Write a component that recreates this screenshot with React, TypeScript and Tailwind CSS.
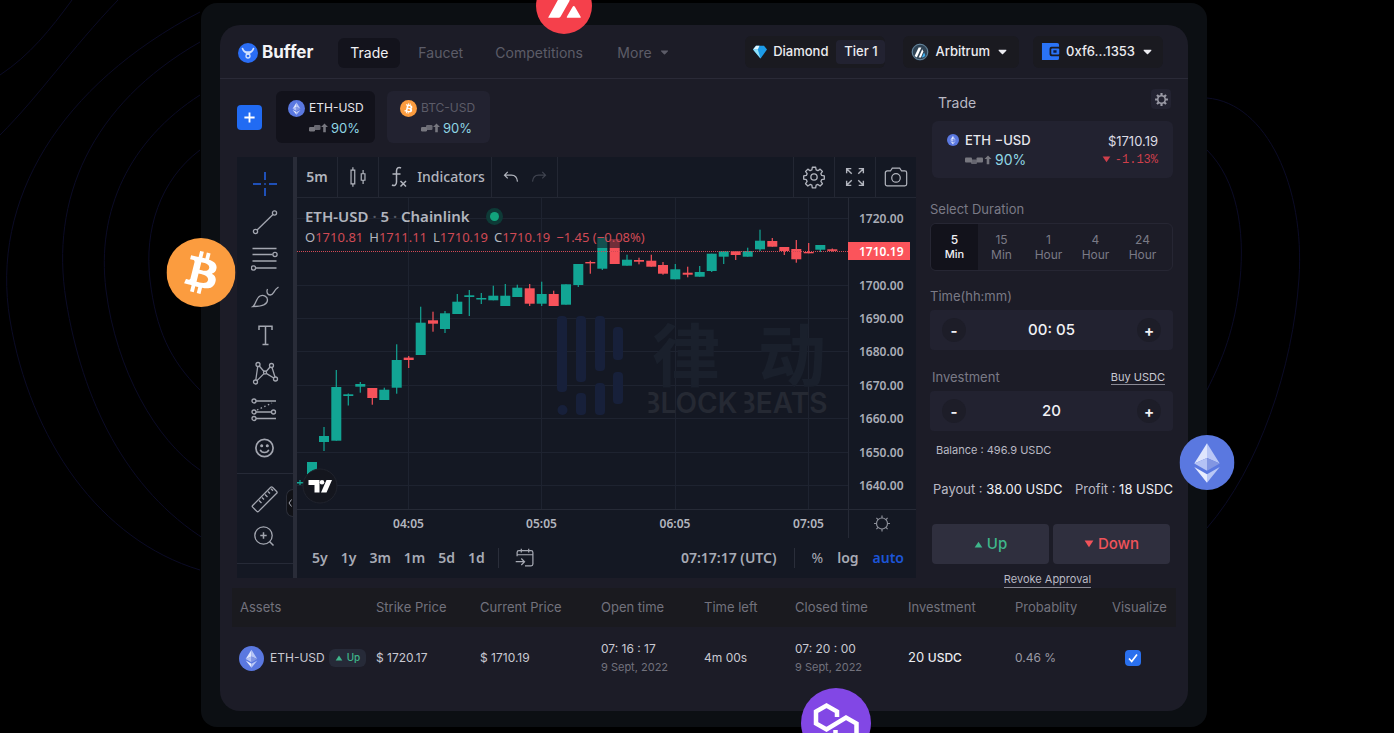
import React, { useState } from "react";

type Candle = { x: number; top: number; bottom: number; high: number; low: number; up: boolean };

const c = (x: number, top: number, bottom: number, high: number, low: number, up: boolean): Candle => ({
  x, top, bottom, high, low, up,
});

const candles: Candle[] = [
  c(300, 482, 483.5, 480, 485, true),
  c(312, 462, 476, 462, 476, true),
  c(324, 436, 442, 427, 451, true),
  c(336.3, 387, 440.7, 370, 440.7, true),
  c(348.3, 394.3, 396, 393.5, 405.5, true),
  c(360.3, 384, 386.7, 382, 392.7, true),
  c(372.3, 388, 398, 388, 404.7, false),
  c(384.3, 389.7, 400, 387.7, 400, true),
  c(396.7, 360, 387.7, 344.3, 393.7, true),
  c(408.7, 357.6, 360, 356, 368, false),
  c(420.7, 322.7, 355, 306.7, 355, true),
  c(433, 320.3, 323.7, 311.7, 331.7, false),
  c(445, 313.3, 329, 311, 333, true),
  c(457.3, 301.7, 314, 294, 314, true),
  c(469.3, 295.3, 297, 290, 316, true),
  c(481.3, 298, 299.5, 293, 304, true),
  c(493.3, 295.7, 300.3, 285.7, 300.3, true),
  c(505.3, 295.7, 306, 284, 306, true),
  c(517.3, 287.7, 297, 284.7, 297, true),
  c(529.7, 288.3, 303.7, 284, 306, false),
  c(541.7, 294, 303.7, 281.7, 306, true),
  c(553.7, 294, 306, 290.7, 306, false),
  c(566, 284.3, 304.7, 284.3, 304.7, true),
  c(578.3, 264, 285, 264, 287, true),
  c(590.3, 262, 263.4, 260.7, 273.7, false),
  c(602.3, 237, 268.7, 237, 270, true),
  c(614.7, 239, 264, 239, 264, false),
  c(627, 259.7, 265.7, 254.7, 265.7, true),
  c(639, 260, 261.7, 257.7, 264.3, false),
  c(651.3, 260.7, 266.7, 254.7, 266.7, false),
  c(663, 265, 273.7, 262, 274.7, false),
  c(675.3, 269.3, 279.3, 264, 279.3, true),
  c(687.7, 272.7, 274.7, 266.7, 277.3, false),
  c(699.7, 272, 276.7, 266, 276.7, true),
  c(711.7, 253.7, 271, 253.7, 272, true),
  c(723.7, 251.3, 256.7, 251.3, 264, true),
  c(735.7, 251.3, 255, 251.3, 260, false),
  c(747.7, 251, 256.7, 247.7, 256.7, true),
  c(760, 240.7, 249.3, 229.7, 251, true),
  c(772.3, 241, 246.7, 238, 246.7, false),
  c(784.3, 247, 251, 247, 255, false),
  c(796.3, 249, 259.3, 240, 262.7, false),
  c(808.7, 252, 253.3, 243, 253.3, false),
  c(820.3, 245, 249.7, 245, 252, true),
  c(832.3, 249.3, 250.9, 248.5, 251.5, false),
];

const prices: [string, number][] = [
  ["1720.00", 218], ["1700.00", 285], ["1690.00", 318], ["1680.00", 351.5],
  ["1670.00", 385], ["1660.00", 418.5], ["1650.00", 452], ["1640.00", 485],
];
const times: [string, number][] = [["04:05", 408.5], ["05:05", 541.5], ["06:05", 675], ["07:05", 808.5]];

const CHART_FONT = '"Noto Sans","Open Sans",sans-serif';

function EthLogo({ className }: { className: string }) {
  return (
    <svg viewBox="0 0 54 54" className={className} aria-hidden="true">
      <circle cx="27" cy="27" r="27" fill="#5a78e0" />
      <path d="M27 8 14.5 28 27 22.5z" fill="#dfe6fd" />
      <path d="M27 8 39.5 28 27 22.5z" fill="#b9c7f6" />
      <path d="M14.5 28 27 22.5V35z" fill="#b4c2f5" />
      <path d="M39.5 28 27 22.5V35z" fill="#8296e2" />
      <path d="M14.5 31.5 27 38.5V47z" fill="#e8edfe" />
      <path d="M39.5 31.5 27 38.5V47z" fill="#b9c7f6" />
    </svg>
  );
}

function BtcLogo({ className }: { className: string }) {
  return (
    <svg viewBox="0 0 32 32" className={className} aria-hidden="true">
      <circle cx="16" cy="16" r="16" fill="#fb9c3f" />
      <path
        fill="#fff"
        d="M23.189 14.02c.314-2.096-1.283-3.223-3.465-3.975l.708-2.84-1.728-.43-.69 2.765c-.454-.114-.92-.22-1.385-.326l.695-2.783L15.596 6l-.708 2.839c-.376-.086-.746-.17-1.104-.26l.002-.009-2.384-.595-.46 1.846s1.283.294 1.256.312c.7.175.826.638.805 1.006l-.806 3.235c.048.012.11.03.18.057l-.183-.045-1.13 4.532c-.086.212-.303.531-.793.41.018.025-1.256-.313-1.256-.313l-.858 1.978 2.25.561c.418.105.828.215 1.231.318l-.715 2.872 1.727.43.708-2.84c.472.127.93.245 1.378.357l-.706 2.828 1.728.43.715-2.866c2.948.558 5.164.333 6.097-2.333.752-2.146-.037-3.385-1.588-4.192 1.13-.26 1.98-1.003 2.207-2.538zm-3.95 5.538c-.533 2.147-4.148.986-5.32.695l.95-3.805c1.172.293 4.929.872 4.37 3.11zm.535-5.569c-.487 1.953-3.495.96-4.47.717l.86-3.45c.975.243 4.118.696 3.61 2.733z"
      />
    </svg>
  );
}

function Caret({ className }: { className: string }) {
  return (
    <svg viewBox="0 0 10 6" className={className} aria-hidden="true">
      <path d="M1.2.6h7.6c.5 0 .7.5.4.9L5.6 5.2c-.3.4-.9.4-1.2 0L.8 1.5C.5 1.1.7.6 1.2.6z" fill="currentColor" />
    </svg>
  );
}

function Triangle({ up, className }: { up?: boolean; className: string }) {
  return (
    <svg viewBox="0 0 10 8" className={className} aria-hidden="true">
      <path d={up ? "M5 .8 9.4 7.4H.6z" : "M5 7.2.6.6h8.800z"} fill="currentColor" />
    </svg>
  );
}

function PayoutMark() {
  return (
    <svg viewBox="0 0 20 10" className="h-[10px] w-5 text-[#77777f]" fill="currentColor" aria-hidden="true">
      <rect x="1" y="4" width="6" height="4.500" rx="1.200" />
      <rect x="6" y="2" width="6.500" height="5" rx="1.200" opacity=".85" />
      <path d="M16.500.5 20 4h-2.200v5.200h-2.600V4H13z" />
    </svg>
  );
}

function Gear({ className }: { className: string }) {
  return (
    <svg viewBox="0 0 28 28" className={className} fill="none" stroke="currentColor" strokeWidth="1.400" strokeLinejoin="round" aria-hidden="true">
      <path d="M12.2 3.500h3.600l.5 2.900 1.900.8 2.400-1.700 2.500 2.500-1.700 2.400.8 1.900 2.900.5v3.600l-2.900.5-.8 1.900 1.700 2.400-2.500 2.500-2.400-1.700-1.900.8-.5 2.900h-3.600l-.5-2.900-1.900-.8-2.400 1.700-2.500-2.500 1.700-2.400-.8-1.900-2.900-.5v-3.600l2.900-.5.8-1.900-1.700-2.400 2.500-2.500 2.400 1.700 1.900-.8z" />
      <circle cx="14" cy="14" r="3.400" />
    </svg>
  );
}

function ToolIcon({ children, small, className = "" }: { children: React.ReactNode; small?: boolean; className?: string }) {
  return (
    <svg viewBox="0 0 28 28" className={`${small ? "h-[26px] w-[26px]" : "h-7 w-7"} ${className}`} fill="none" stroke="currentColor" strokeWidth="1.300" aria-hidden="true">
      {children}
    </svg>
  );
}

const drawingTools: { name: string; active?: boolean; icon: React.ReactNode }[] = [
  { name: "Cross", active: true, icon: <path strokeWidth="2" d="M14 2v8M14 18v8M2 14h8M18 14h8M14 13.200v1.600" /> },
  {
    name: "Trend line",
    icon: (<><circle cx="4.500" cy="23.500" r="2.100" /><circle cx="23.500" cy="5" r="2.100" /><path d="M6.100 22 22 6.500" /></>),
  },
  {
    name: "Fib retracement",
    icon: (<><path d="M1.500 3.500h24M1.500 9.500h20M1.500 16h24M4.500 23h21" /><circle cx="24" cy="9.500" r="2.100" /><circle cx="2.500" cy="23" r="2.100" /></>),
  },
  {
    name: "Brush",
    icon: (<><path d="M2 23.500c3-2 3-8.500 7-10.500 3.500-1.500 7.500.5 7.500 4 0 5-5.500 6.500-14.500 6.500z" /><path d="M16.500 6c-1.500 3 0 6 2.700 6 3.800 0 3-4.500 8.300-8" /></>),
  },
  { name: "Text", icon: <path strokeWidth="1.500" d="M8 9V5.200h13V9M14.500 5.200v18.300M11.500 23.500h6" /> },
  {
    name: "Patterns",
    icon: (<><circle cx="7" cy="5.500" r="2" /><circle cx="20.500" cy="6.500" r="2" /><circle cx="4.500" cy="23" r="2" /><circle cx="24.500" cy="20" r="2" /><circle cx="14" cy="13.500" r="1.500" /><path d="M6.700 7.500 4.800 21M8.300 7 13 12.500M15.200 12.500 19 8M21 8.500l3 9.500M6 21.600l7-7M15.200 14.400l7.600 4.600" /></>),
  },
  {
    name: "Prediction",
    icon: (<><circle cx="3" cy="5" r="2" /><circle cx="3" cy="16" r="2" /><circle cx="22.500" cy="16" r="2" /><circle cx="3" cy="22.500" r="2" /><path d="M5 5h20M5 16h15.500M5 22.500h20" /><path strokeDasharray="1.500 2.500" d="M6 14 21 7" /></>),
  },
  {
    name: "Icons",
    icon: (<><circle cx="13.500" cy="14" r="8.600" strokeWidth="1.700" /><path strokeWidth="1.600" d="M9.200 15.800c1.500 3.600 7.100 3.600 8.600 0" /><circle cx="10.700" cy="11.700" r=".9" fill="currentColor" /><circle cx="16.300" cy="11.700" r=".9" fill="currentColor" /></>),
  },
];

function Header() {
  return (
    <header className="flex h-[54px] items-center justify-between border-b border-[#2a2a37] pl-[18px] pr-[25px]">
      <div className="flex items-center pt-[2px]">
        <a href="#home" className="flex items-center gap-1 text-[17px] font-bold text-[#f3f3f6]">
          <svg viewBox="0 0 20 20" className="h-5 w-5" aria-hidden="true">
            <circle cx="10" cy="10" r="10" fill="#2a6df5" />
            <path d="M4.500 5.500c1 3 3 4 5.500 3.500 2.500.5 4.500-.5 5.500-3.500M7 9l3 2 3-2" stroke="#cfe0ff" strokeWidth="1.700" fill="none" strokeLinecap="round" />
            <circle cx="10" cy="13" r="2" fill="none" stroke="#cfe0ff" strokeWidth="1.300" />
          </svg>
          Buffer
        </a>
        <nav className="ml-[25px] flex items-center text-sm text-[#5c5c68]">
          <a href="#trade" className="grid h-[30px] w-[62px] place-items-center rounded-md bg-[#13131c] text-[#f0f0f4]">Trade</a>
          <a href="#faucet" className="ml-[18px] w-[77px]">Faucet</a>
          <a href="#competitions" className="w-[122px]">Competitions</a>
          <button type="button" className="flex items-center gap-2">
            More
            <Caret className="h-[5px] w-[9px]" />
          </button>
        </nav>
      </div>
      <div className="flex items-center text-[13px] font-medium text-[#ececf1]">
        <div className="flex h-8 items-center rounded-md bg-[#1a1a20] pl-2">
          <svg viewBox="0 0 14 14" className="mr-[6px] h-[14px] w-[14px]" aria-hidden="true">
            <path d="M3 .8h8L14 4.500 7.500 13.500 0 4.500z" fill="#1c9be8" />
            <path d="M3 .8h3.500L4.800 4.500H0z" fill="#dff6ff" />
            <path d="M0 4.500h4.800l2.700 9z" fill="#8fe0f7" />
          </svg>
          Diamond
          <span className="ml-2 grid h-6 w-[49px] place-items-center rounded bg-[#222231]">Tier 1</span>
        </div>
        <button type="button" className="ml-[18px] flex h-8 items-center rounded-md bg-[#1a1a20] pl-2 pr-3">
          <svg viewBox="0 0 20 20" className="mr-[6px] h-[18px] w-[18px]" aria-hidden="true">
            <circle cx="10" cy="10" r="9.500" fill="#2f4354" />
            <circle cx="10" cy="10" r="8.600" fill="none" stroke="#6d8ea6" strokeWidth="1" />
            <path d="M4 14.500 8.500 5h3L6.500 16z" fill="#fff" />
            <path d="M8.500 16 12.500 7l1.200 2.500L11 16z" fill="#fff" />
            <path d="M12 16l2.500-5.500 1.500 3-1.500 2z" fill="#3fb0ef" />
          </svg>
          Arbitrum
          <Caret className="ml-2 h-[6px] w-[9px]" />
        </button>
        <button type="button" className="ml-[14px] flex h-8 items-center rounded-md bg-[#1a1a20] pl-2 pr-[11px]">
          <svg viewBox="0 0 20 20" className="mr-[6px] h-[19px] w-[19px]" aria-hidden="true">
            <path d="M1 1h16a2 2 0 0 1 2 2v2h-8a2 2 0 0 0-2 2v6a2 2 0 0 0 2 2h8v2a2 2 0 0 1-2 2H1z" fill="#2a73f6" />
            <rect x="10.800" y="6.800" width="8.400" height="6.400" rx="1" fill="#2a73f6" />
            <rect x="13" y="8.700" width="3.400" height="2.600" fill="#0d1c40" />
          </svg>
          0xf6...1353
          <Caret className="ml-2 h-[6px] w-[9px]" />
        </button>
      </div>
    </header>
  );
}

function PairTabs() {
  return (
    <div className="flex h-[52px] items-center">
      <button type="button" aria-label="Add pair" className="grid h-[25px] w-[25px] place-items-center rounded bg-[#216bf3]">
        <svg viewBox="0 0 14 14" className="h-[13px] w-[13px]" aria-hidden="true">
          <path d="M7 1.500v11M1.500 7h11" stroke="#fff" strokeWidth="2" />
        </svg>
      </button>
      <button type="button" className="ml-[14px] grid h-full w-[99px] grid-cols-[auto_1fr] content-center items-center gap-x-1 rounded-md bg-[#12121b] pl-3 pt-[2px] text-left text-xs leading-5 text-[#e6e6ec]">
        <EthLogo className="h-[17px] w-[17px]" />
        <span>ETH-USD</span>
        <span className="col-span-2 flex items-center gap-[3px] pl-5 text-[13px] text-[#8fd6e4]"><PayoutMark />90%</span>
      </button>
      <button type="button" className="ml-3 grid h-full w-[103px] grid-cols-[auto_1fr] content-center items-center gap-x-1 rounded-md bg-[#222230] pl-[13px] pt-[2px] text-left text-xs leading-5 text-[#5c5c68]">
        <BtcLogo className="h-[17px] w-[17px]" />
        <span>BTC-USD</span>
        <span className="col-span-2 flex items-center gap-[3px] pl-5 text-[13px] text-[#8fd6e4]"><PayoutMark />90%</span>
      </button>
    </div>
  );
}

function ToolSidebar() {
  return (
    <div className="relative flex w-14 flex-none flex-col text-[#a3a6b0]">
      <div className="mt-2 flex h-[302px] flex-col">
        {drawingTools.map((t) => (
          <button key={t.name} type="button" aria-label={t.name} className="grid flex-1 place-items-center">
            <ToolIcon className={t.active ? "text-[#1f50b8]" : ""}>{t.icon}</ToolIcon>
          </button>
        ))}
      </div>
      <div className="mt-[6px] flex h-[91px] flex-col border-y border-[#262a37] pt-[6px]">
        <button type="button" aria-label="Measure" className="grid h-[37px] place-items-center">
          <ToolIcon>
            <rect x="-0.500" y="9.800" width="28" height="8.400" rx="1.200" transform="rotate(-45 14 14)" />
            <path d="m8 15.500 2.500 2.500M11 12.500l2 2M14 9.500l2.500 2.500M17 6.500l2 2M20 3.700l2 2" />
          </ToolIcon>
        </button>
        <button type="button" aria-label="Zoom in" className="grid h-[37px] place-items-center">
          <ToolIcon>
            <circle cx="12.500" cy="13.500" r="8.700" />
            <path strokeWidth="1.500" d="M12.500 10.300v6.400M9.300 13.500h6.400M18.500 19.500 22.500 23.500" />
          </ToolIcon>
        </button>
      </div>
      <button type="button" aria-label="Collapse toolbar" className="absolute right-0 top-[332px] grid h-7 w-[7px] place-items-center rounded-l-full border border-r-0 border-[#2a2d38] bg-[#101116]">
        <svg viewBox="0 0 4 8" className="h-2 w-1" fill="none" stroke="currentColor" aria-hidden="true"><path d="M3.500.5 1 4l2.500 3.500" /></svg>
      </button>
    </div>
  );
}

function ChartToolbar() {
  return (
    <div className="flex h-[41px] items-stretch border-b border-[#232733] text-sm font-semibold text-[#b2b5be]">
      <button type="button" className="w-[41px] border-r border-[#232733]">5m</button>
      <button type="button" aria-label="Candles" className="grid w-[41px] place-items-center border-r border-[#232733]">
        <ToolIcon small><path d="M6.500 6.500h4v15h-4zM8.500 3.500v3M8.500 21.500v3M17.500 10.500h4v7h-4zM19.500 6.500v4M19.500 17.500v4" /></ToolIcon>
      </button>
      <button type="button" className="flex w-[113px] items-center justify-center gap-1 border-r border-[#232733] font-medium">
        <ToolIcon><path strokeWidth="1.500" d="M16 5c-2.500-1.500-4.500 0-4.500 3v11c0 3-2 4.500-4.500 3M7.500 11h8M15.500 18l5.500 5.500M21 18l-5.500 5.500" /></ToolIcon>
        Indicators
      </button>
      <div className="flex w-[66px] items-center justify-center gap-[2px] border-r border-[#232733]">
        <button type="button" aria-label="Undo"><ToolIcon small><path d="M10.500 8.500 7 12l3.500 3.500M7 12h7.500c4 0 6 2 6.500 7" /></ToolIcon></button>
        <button type="button" aria-label="Redo" className="text-[#3f434f]"><ToolIcon small><path d="M17.500 8.500 21 12l-3.500 3.500M21 12h-7.500c-4 0-6 2-6.500 7" /></ToolIcon></button>
      </div>
      <div className="flex-1" />
      <button type="button" aria-label="Settings" className="grid w-[41px] place-items-center border-l border-[#232733]"><Gear className="h-[26px] w-[26px]" /></button>
      <button type="button" aria-label="Fullscreen" className="grid w-[41px] place-items-center border-l border-[#232733]">
        <ToolIcon small><path strokeWidth="1.500" d="M5 10V5h5M5 5l5.500 5.500M18 5h5v5M23 5l-5.500 5.500M5 18v5h5M5 23l5.500-5.500M18 23h5v-5M23 23l-5.500-5.500" /></ToolIcon>
      </button>
      <button type="button" aria-label="Snapshot" className="grid w-[41px] place-items-center border-l border-[#232733]">
        <ToolIcon small><path d="M4.500 7.500H8l2-3h8l2 3h3.500a2 2 0 0 1 2 2v12a2 2 0 0 1-2 2h-19a2 2 0 0 1-2-2v-12a2 2 0 0 1 2-2z" /><circle cx="14" cy="15" r="4.600" /></ToolIcon>
      </button>
    </div>
  );
}

function Watermark() {
  return (
    <g>
      <g fill="#17203a">
        <rect x="557" y="316" width="10" height="76" rx="4" />
        <rect x="576" y="316" width="10" height="66" rx="4" />
        <rect x="595" y="316" width="10" height="55" rx="4" />
        <rect x="613" y="327" width="10" height="33" rx="4" />
        <rect x="613" y="372" width="10" height="32" rx="4" />
        <rect x="595" y="383" width="10" height="32" rx="4" />
        <rect x="576" y="393" width="10" height="22" rx="4" />
        <circle cx="562.500" cy="410" r="5" />
      </g>
      <g fill="#1a202c" fontFamily='"Noto Sans CJK SC",sans-serif' fontWeight="700" fontSize="68">
        <text x="652" y="381">律</text>
        <text x="758" y="381">动</text>
      </g>
      <text x="642" y="413" fill="#252933" fontFamily="Inter,sans-serif" fontWeight="600" fontSize="28">BLOCKBEATS</text>
      <path d="M641 392h7.500v22H641zM738 392h6.500v22H738z" fill="#141823" />
    </g>
  );
}

function PriceChart() {
  return (
    <div className="relative">
      <svg viewBox="297 198 619 340" className="block w-full" role="img" aria-label="ETH-USD five minute candles" fontFamily={CHART_FONT}>
        <g stroke="#1e2330" strokeWidth="1">
          {prices.map(([p, y]) => <path key={p} d={`M297 ${Math.floor(y)}.500H848`} />)}
          {times.map(([t, x]) => <path key={t} d={`M${Math.floor(x)}.500 198V509`} />)}
        </g>
        <Watermark />
        <path d="M297 509.500H916M848.500 198V538" stroke="#262a36" />
        {candles.map((k) => (
          <g key={k.x} fill={k.up ? "#12a594" : "#f7525a"}>
            <rect x={k.x - 0.6} y={k.high} width="1.200" height={k.low - k.high} />
            <rect x={k.x - 5} y={k.top} width="10" height={k.bottom - k.top} />
          </g>
        ))}
        <rect x="596" y="236" width="25" height="12" fill="#141823" opacity=".6" />
        <path d="M297 251.500H848" stroke="#d24a55" strokeDasharray="1 1" />
        <rect x="848" y="242" width="62" height="18" fill="#fb545b" />
        <g fontSize="12" fontWeight="600" fill="#aaadb7">
          {prices.map(([p, y]) => <text key={p} x="859" y={y + 4.5}>{p}</text>)}
          <text x="859" y="255.500" fill="#fff">1710.19</text>
        </g>
        <g fontSize="12" fontWeight="600" fill="#b2b5be" textAnchor="middle">
          {times.map(([t, x]) => <text key={t} x={x} y="528">{t}</text>)}
        </g>
        <circle cx="320" cy="486" r="17" fill="#14161e" stroke="#20232d" />
        <path d="M308.500 480h11v12.500h-5V485h-6zM326.500 480h5.500l-5.500 12.500H321z" fill="#fff" />
        <circle cx="322" cy="482.300" r="2.300" fill="#fff" />
        <g fill="none" stroke="#8c8f99" strokeWidth="1.200">
          <circle cx="882" cy="523.500" r="5.500" />
          <path d="M882 515.500v2.500M882 529v2.500M874 523.500h2.500M887.500 523.500h2.500M876.400 517.900l1.700 1.700M885.900 527.400l1.700 1.700M887.600 517.900l-1.700 1.700M878.100 527.400l-1.700 1.700" />
        </g>
      </svg>
      <div className="absolute left-2 top-2 whitespace-nowrap">
        <div className="flex items-center gap-4 text-[15px] leading-5 font-semibold text-[#b2b5be]">
          <span className="whitespace-pre">ETH-USD <span className="text-[#565a66]">·</span> 5 <span className="text-[#565a66]">·</span> Chainlink</span>
          <span className="grid h-[17px] w-[17px] place-items-center rounded-full bg-[#0e3a37]">
            <span className="h-[9px] w-[9px] rounded-full bg-[#12a37c]" />
          </span>
        </div>
        <div className="flex gap-[6px] text-[13px] leading-[22px] text-[#d04a55]">
          <span><span className="text-[#b2b5be]">O</span>1710.81</span>
          <span><span className="text-[#b2b5be]">H</span>1711.11</span>
          <span><span className="text-[#b2b5be]">L</span>1710.19</span>
          <span><span className="text-[#b2b5be]">C</span>1710.19</span>
          <span>−1.45 (−0.08%)</span>
        </div>
      </div>
    </div>
  );
}

function ChartFooter() {
  return (
    <div className="flex h-10 items-center justify-between pl-[15px] pr-3 text-sm font-semibold text-[#a8abb5]">
      <div className="flex items-center gap-[13px]">
        {["5y", "1y", "3m", "1m", "5d", "1d"].map((r) => <button key={r} type="button">{r}</button>)}
        <span className="h-5 w-px bg-[#2a2e3a]" />
        <button type="button" aria-label="Go to date">
          <ToolIcon small><path d="M5.500 12V8a2 2 0 0 1 2-2h13a2 2 0 0 1 2 2v12.500a2 2 0 0 1-2 2H14M5.500 10.500h17M10 4v4M18 4v4M4 18h9M10 14.500l3.500 3.500-3.500 3.500" /></ToolIcon>
        </button>
      </div>
      <div className="flex items-center">
        <button type="button">07:17:17 (UTC)</button>
        <span className="mx-[17px] h-5 w-px bg-[#2a2e3a]" />
        <div className="flex gap-[14px]">
          <button type="button" className="font-normal">%</button>
          <button type="button">log</button>
          <button type="button" className="text-[#1c55d8]">auto</button>
        </div>
      </div>
    </div>
  );
}

function Stepper({ id, value, onChange, onMinus, onPlus }: {
  id: string; value: string; onChange: (v: string) => void; onMinus: () => void; onPlus: () => void;
}) {
  return (
    <div className="mt-1 flex h-10 items-center rounded bg-[#222230] px-3 text-[#f1f1f5]">
      <button type="button" aria-label="Decrease" onClick={onMinus} className="grid h-6 w-6 flex-none place-items-center rounded-full bg-[#1d1d28] text-[15px] leading-none font-bold">-</button>
      <input id={id} value={value} onChange={(e) => onChange(e.target.value)} className="min-w-0 flex-1 bg-transparent text-center text-[15px] font-medium outline-none" />
      <button type="button" aria-label="Increase" onClick={onPlus} className="grid h-6 w-6 flex-none place-items-center rounded-full bg-[#1d1d28] text-[15px] leading-none font-bold">+</button>
    </div>
  );
}

const durations: [string, string][] = [["5", "Min"], ["15", "Min"], ["1", "Hour"], ["4", "Hour"], ["24", "Hour"]];

function TradePanel() {
  const [active, setActive] = useState(0);
  const [time, setTime] = useState("00: 05");
  const [amount, setAmount] = useState("20");
  const bump = (d: number) => setAmount(String(Math.max(0, Number(amount) + d)));
  const bumpTime = (d: number) => {
    const [h, m] = time.split(":").map((s) => Number(s) || 0);
    const total = Math.max(0, h * 60 + m + d);
    setTime(`${String(Math.floor(total / 60)).padStart(2, "0")}: ${String(total % 60).padStart(2, "0")}`);
  };
  return (
    <section className="w-[243px] flex-none text-[#7a7a86]">
      <div className="mt-[10px] flex h-[26px] items-end justify-between pl-2 pr-[2px]">
        <h2 className="text-sm leading-6 text-[#b9b9c4]">Trade</h2>
        <button type="button" aria-label="Trade settings" className="grid h-5 w-5 place-items-center self-start rounded bg-[#232331] text-[#9a9aa5]">
          <svg viewBox="0 0 28 28" className="h-[15px] w-[15px]" fill="none" stroke="currentColor" aria-hidden="true">
            <circle cx="14" cy="14" r="7" strokeWidth="3" />
            <path strokeWidth="4" d="M14 2v5M14 21v5M2 14h5M21 14h5M5.500 5.500 9 9M19 19l3.500 3.500M22.500 5.500 19 9M9 19l-3.500 3.500" />
          </svg>
        </button>
      </div>
      <div className="ml-[2px] mt-[6px] flex h-[57px] items-center justify-between rounded-md bg-[#222230] pl-[15px] pr-[15px]">
        <div className="grid grid-cols-[auto_1fr] items-center gap-x-[6px] text-[13px] leading-5 font-medium text-[#e8e8ee]">
          <EthLogo className="h-3 w-3" />
          <span>ETH −USD</span>
          <span />
          <span className="flex items-center gap-[3px] text-sm font-normal leading-5 text-[#8fd6e4]">
            <svg viewBox="0 0 27 10" className="h-[10px] w-[27px] text-[#77777f]" fill="currentColor" aria-hidden="true">
              <rect x="0" y="2.500" width="7" height="5" rx="1" /><rect x="6" y="4.500" width="6" height="4.500" rx="1" opacity=".8" /><rect x="11.500" y="2.500" width="6.500" height="5" rx="1" />
              <path d="M23 .5 26.500 4h-2.200v5.200h-2.600V4h-2.200z" />
            </svg>
            90%
          </span>
        </div>
        <div className="text-right text-[13px] leading-5 text-[#dcdce4]">
          <div>$1710.19</div>
          <div className="flex items-center justify-end gap-1 font-['Liberation_Mono',monospace] text-xs leading-[18px] text-[#cf3f4b]">
            <Triangle className="h-[7px] w-[9px]" />-1.13%
          </div>
        </div>
      </div>

      <div id="duration-label" className="mt-[21px] h-5 text-[13px] leading-5">Select Duration</div>
      <div role="group" aria-labelledby="duration-label" className="mt-1 grid h-12 grid-cols-5 overflow-hidden rounded-md border border-[#262633] pr-[6px] text-xs leading-[15px]">
        {durations.map(([n, unit], i) => (
          <button
            key={i}
            type="button"
            aria-pressed={active === i}
            onClick={() => setActive(i)}
            className={active === i ? "bg-[#12121b] font-medium text-[#f1f1f5]" : ""}
          >
            <span className="block">{n}</span>
            <span className={active === i ? "block text-[11px]" : "block"}>{unit}</span>
          </button>
        ))}
      </div>

      <label htmlFor="time" className="mt-[15px] block h-5 text-[13px] leading-5">Time(hh:mm)</label>
      <Stepper id="time" value={time} onChange={setTime} onMinus={() => bumpTime(-1)} onPlus={() => bumpTime(1)} />

      <div className="mt-[17px] flex h-5 items-center justify-between pl-[2px] pr-2">
        <label htmlFor="investment" className="text-[13px] leading-5">Investment</label>
        <a href="#buy" className="border-b border-[#8a8a95] text-[11px] leading-[14px] text-[#c9c9d2]">Buy USDC</a>
      </div>
      <Stepper id="investment" value={amount} onChange={setAmount} onMinus={() => bump(-1)} onPlus={() => bump(1)} />

      <div className="mt-[9px] h-5 pl-[6px] text-[11px] leading-5 text-[#b9b9c4]">Balance : 496.9 USDC</div>
      <div className="mt-[19px] flex h-5 justify-between whitespace-nowrap pl-[3px] text-[13px] leading-5 text-[#b9b9c4]">
        <span>Payout : <span className="text-[#f1f1f5]">38.00 USDC</span></span>
        <span>Profit : <span className="text-[#f1f1f5]">18 USDC</span></span>
      </div>
      <div className="mt-[25px] grid h-10 grid-cols-2 gap-1 pl-[2px] pr-[3px] text-[15px] font-medium">
        <button type="button" className="flex items-center justify-center gap-1 rounded bg-[#2f2f3e] text-[#3fb68b]"><Triangle up className="h-[7px] w-[9px]" />Up</button>
        <button type="button" className="flex items-center justify-center gap-1 rounded bg-[#2f2f3e] text-[#f0535a]"><Triangle className="h-[8px] w-[10px]" />Down</button>
      </div>
      <div className="mt-2 flex h-4 justify-center pr-2">
        <a href="#revoke" className="border-b border-[#8a8a95] text-[11px] leading-[15px] text-[#b9b9c4]">Revoke Approval</a>
      </div>
    </section>
  );
}

function TradesTable() {
  return (
    <table className="w-full table-fixed text-left text-[#c9c9d2]">
      <colgroup>
        <col className="w-[144px]" /><col className="w-[104px]" /><col className="w-[121px]" /><col className="w-[103px]" /><col className="w-[91px]" />
        <col className="w-[113px]" /><col className="w-[107px]" /><col className="w-[97px]" /><col className="w-[64px]" />
      </colgroup>
      <thead>
        <tr className="h-[39px] bg-[#1a1a1f] text-[13px] text-[#72727d]">
          {["Assets", "Strike Price", "Current Price", "Open time", "Time left", "Closed time", "Investment", "Probablity", "Visualize"].map((h) => (
            <th key={h} scope="col" className="whitespace-nowrap font-normal first:pl-2">{h}</th>
          ))}
        </tr>
      </thead>
      <tbody>
        <tr className="h-[62px] text-xs">
          <td className="pl-[7px]">
            <div className="flex items-center whitespace-nowrap">
              <EthLogo className="h-[25px] w-[25px]" />
              <span className="ml-[6px]">ETH-USD</span>
              <span className="ml-1 flex h-[18px] items-center gap-1 rounded-md bg-[#262a38] px-[6px] text-[10px] font-medium text-[#3fb68b]"><Triangle up className="h-[6px] w-2" />Up</span>
            </div>
          </td>
          <td>$ 1720.17</td>
          <td>$ 1710.19</td>
          <td><div className="leading-[18px]">07: 16 : 17</div><div className="text-[11px] leading-[18px] text-[#72727d]">9 Sept, 2022</div></td>
          <td>4m 00s</td>
          <td><div className="leading-[18px]">07: 20 : 00</div><div className="text-[11px] leading-[18px] text-[#72727d]">9 Sept, 2022</div></td>
          <td className="text-[13px] text-[#ececf1]">20 <span className="text-xs font-medium">USDC</span></td>
          <td className="text-[#9a9aa5]">0.46 %</td>
          <td>
            <label className="ml-[13px] grid h-4 w-4 place-items-center">
              <input type="checkbox" defaultChecked aria-label="Visualize" className="peer col-start-1 row-start-1 h-4 w-4 appearance-none rounded bg-[#26262f] checked:bg-[#2a70ee]" />
              <svg viewBox="0 0 12 12" className="pointer-events-none col-start-1 row-start-1 hidden h-3 w-3 peer-checked:block" fill="none" stroke="#fff" strokeWidth="1.700" aria-hidden="true"><path d="m2 6.500 2.700 3L10 2.500" /></svg>
            </label>
          </td>
        </tr>
      </tbody>
    </table>
  );
}

function Backdrop() {
  return (
    <svg viewBox="0 0 1394 733" preserveAspectRatio="xMidYMid slice" className="absolute inset-0 h-full w-full" fill="none" stroke="#0b0b26" aria-hidden="true">
      <path d="M0 135C40 95 70 50 118 0M0 75C30 55 50 30 72 0" />
      <path d="M200 42C90 105 50 200 66 300s60 190 140 240" />
      <path d="M200 12C60 85-10 200 10 320s90 220 190 250" />
      <path d="M200 95C130 140 96 210 106 290s50 150 94 180" />
      <path d="M200 150c-40 30-56 80-50 130s20 80 50 110" />
      <path d="M1207 98c60 5 98 90 92 180s-40 190-92 250" />
      <path d="M1207 150c30 30 38 80 33 130s-18 80-33 110" />
    </svg>
  );
}

export default function App() {
  return (
    <div className="relative min-h-screen overflow-hidden bg-black pb-[6px] pl-[201px] pr-[187px] pt-[3px] font-[Inter,sans-serif]">
      <Backdrop />
      <div className="relative min-w-[1006px] rounded-2xl bg-[#0c0f13] px-[19px] pb-4 pt-[22px]">
        <main className="rounded-[20px] bg-[#1c1c27] pb-[22px]">
          <Header />
          <div className="flex gap-[14px] pl-[17px] pr-[15px]">
            <div className="min-w-0 flex-1 pt-3">
              <PairTabs />
              <section className="mt-[14px] flex bg-[#141823] font-['Noto_Sans','Open_Sans',sans-serif]">
                <ToolSidebar />
                <div className="w-1 flex-none bg-[#292c38]" />
                <div className="min-w-0 flex-1">
                  <ChartToolbar />
                  <PriceChart />
                  <ChartFooter />
                </div>
              </section>
            </div>
            <TradePanel />
          </div>
          <div className="px-3">
            <TradesTable />
          </div>
        </main>

        <svg viewBox="0 0 56 56" className="absolute left-[335px] top-[-25px] h-14 w-14" aria-hidden="true">
          <circle cx="28" cy="28" r="28" fill="#f5404b" />
          <path d="M12.500 39 26 14.500c1-1.700 3-1.700 4 0l3.200 5.800c.6 1.100.6 2.200 0 3.300l-8.400 14.700c-.6 1-1.500 1.500-2.600 1.500h-8.700c-1.200 0-1.600-.2-1-.8zM31 38.500l5.500-9.500c.7-1.200 1.800-1.200 2.500 0l5.500 9.500c.6 1 .1 1.300-1 1.300H32c-1.100 0-1.600-.3-1-1.300z" fill="#fff" />
        </svg>
        <BtcLogo className="absolute left-0 top-[235px] h-[69px] w-[69px] -translate-x-1/2" />
        <EthLogo className="absolute right-0 top-[432px] h-[55px] w-[55px] translate-x-1/2" />
        <svg viewBox="0 0 70 70" className="absolute left-[600px] top-[685px] h-[70px] w-[70px]" fill="none" aria-hidden="true">
          <circle cx="35" cy="35" r="35" fill="#8247e5" />
          <path d="M36 29v-5.500L25.500 17.500 15 23.500v12L25.500 41.500 45 29.500 55.500 35.500v12L45 53.500 34.500 47.500V42" stroke="#fff" strokeWidth="4.500" />
        </svg>
      </div>
    </div>
  );
}
